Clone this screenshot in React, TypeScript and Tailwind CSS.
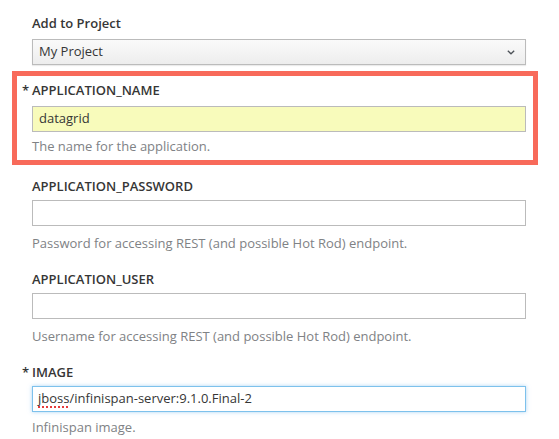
const font = { fontFamily: '"Open Sans", "Liberation Sans", sans-serif' };

type field = {
  name: string;
  help: string;
  required?: boolean;
};

const fields: field[] = [
  {
    name: "APPLICATION_PASSWORD",
    help: "Password for accessing REST (and possible Hot Rod) endpoint.",
  },
  {
    name: "APPLICATION_USER",
    help: "Username for accessing REST (and possible Hot Rod) endpoint.",
  },
];

const Label = ({ text, required }: { text: string; required?: boolean }) => (
  <div className="h-[18px] leading-[18px] text-[13px] font-semibold text-[#363636]">
    {required && <span className="inline-block w-[10px] -ml-[10px]">*</span>}
    {text}
  </div>
);

const Help = ({ text }: { text: string }) => (
  <div className="h-[18px] leading-[18px] text-[13px] text-[#808285]">{text}</div>
);

const App = () => {
  return (
    <div className="w-[559px] h-[439px] bg-white overflow-hidden" style={font}>
      <div className="pl-[32px] pr-[33px] pt-[14px]">
        <Label text="Add to Project" />
        <div className="mt-[7px] h-[26px] flex items-center justify-between border border-[#bbbbbb] bg-gradient-to-b from-[#fafafa] to-[#ededed] shadow-[0_1px_1px_rgba(0,0,0,0.08)] pl-[6px] pr-[10px] text-[13px] text-[#363636]">
          <span>My Project</span>
          <svg width="8" height="5" viewBox="0 0 8 5" fill="none">
            <path d="M0.8 0.8 L4 3.8 L7.2 0.8" stroke="#4d5258" strokeWidth="1.3" />
          </svg>
        </div>

        <div className="-ml-[20px] -mr-[12px] mt-[6px] border-[5px] border-[#f86a5a] pl-[15px] pr-[7px] pt-[5px] pb-[5px]">
          <Label text="APPLICATION_NAME" required />
          <div className="mt-[7px] h-[26px] flex items-center border border-[#bbbbbb] bg-[#f8fbbb] px-[6px] text-[13px] text-[#363636]">
            datagrid
          </div>
          <div className="mt-[5px]">
            <Help text="The name for the application." />
          </div>
        </div>

        <div className="mt-[12px] flex flex-col gap-[18px]">
          {fields.map((f) => (
            <div key={f.name}>
              <Label text={f.name} required={f.required} />
              <div className="mt-[5px] h-[26px] border border-[#bbbbbb] bg-white" />
              <div className="mt-[8px]">
                <Help text={f.help} />
              </div>
            </div>
          ))}
          <div>
            <Label text="IMAGE" required />
            <div className="mt-[5px] h-[26px] flex items-center border border-[#7dc1ec] shadow-[0_0_4px_rgba(102,175,233,0.55)] bg-white px-[5px] text-[13px] text-[#363636]">
              <span className="underline decoration-dotted decoration-[#e53b3b] decoration-[1.5px] underline-offset-[3px]">
                jboss
              </span>
              <span>/infinispan-server:9.1.0.Final-2</span>
            </div>
            <div className="mt-[6px]">
              <Help text="Infinispan image." />
            </div>
          </div>
        </div>
      </div>
    </div>
  );
};

export default App;
